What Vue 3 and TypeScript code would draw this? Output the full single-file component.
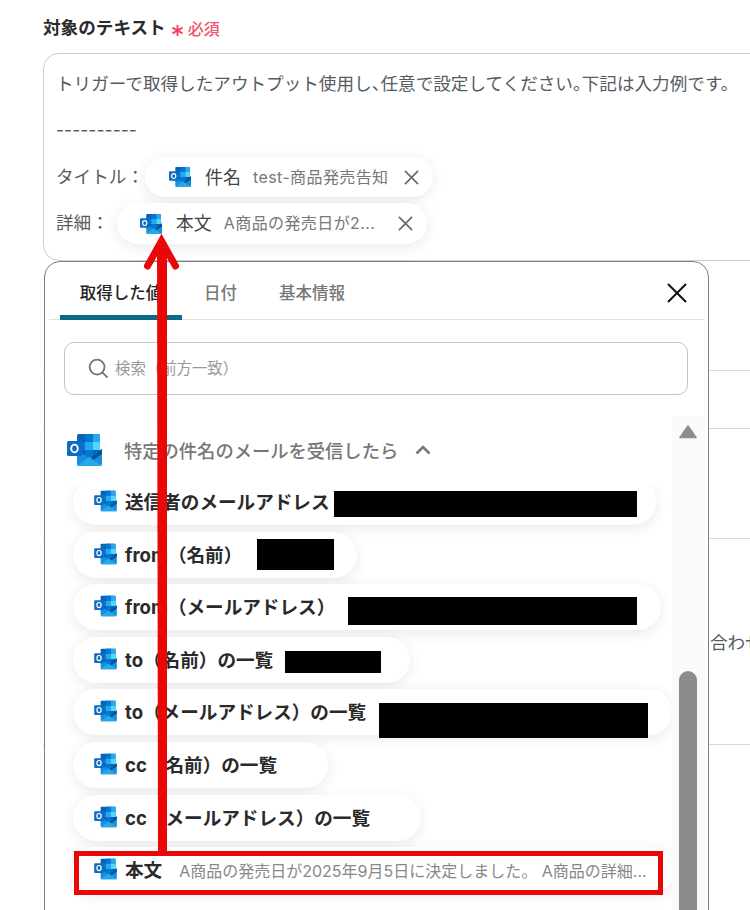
<script setup lang="ts">
interface Item {
  name: string
  width: number
  redact?: { w: number; h: number; ml: number; dy: number }
  sample?: string
}

const items: Item[] = [
  { name: '送信者のメールアドレス', width: 583, redact: { w: 303, h: 26, ml: 4, dy: 4 } },
  { name: 'from（名前）', width: 284, redact: { w: 77, h: 31, ml: 15, dy: 0 } },
  { name: 'from（メールアドレス）', width: 588, redact: { w: 289, h: 28, ml: 13, dy: 8 } },
  { name: 'to（名前）の一覧', width: 337, redact: { w: 96, h: 22, ml: 12, dy: 4 } },
  { name: 'to（メールアドレス）の一覧', width: 599, redact: { w: 269, h: 35, ml: 13, dy: 17 } },
  { name: 'cc（名前）の一覧', width: 255 },
  { name: 'cc（メールアドレス）の一覧', width: 348 },
  { name: '本文', width: 602, sample: 'A商品の発売日が2025年9月5日に決定しました。 A商品の詳細...' },
]
</script>

<template>
  <div class="page">
    <svg class="defs" width="0" height="0" aria-hidden="true">
      <symbol id="ol" viewBox="0 0 35 34">
        <rect x="10" y="1" width="23" height="24" rx="1.5" fill="#0364b8" />
        <rect x="18" y="1" width="8" height="8" fill="#0078d4" />
        <rect x="26" y="1" width="7" height="8" fill="#28a8ea" />
        <rect x="10" y="9" width="8" height="8" fill="#0078d4" />
        <rect x="18" y="9" width="8" height="8" fill="#28a8ea" />
        <rect x="26" y="9" width="7" height="8" fill="#50d9ff" />
        <rect x="18" y="17" width="8" height="8" fill="#0078d4" />
        <path d="M10 17 L22 25 L35 16 V31 a2 2 0 0 1 -2 2 H12 a2 2 0 0 1 -2 -2 Z" fill="#1490df" />
        <path d="M24 24 L35 16 V21 L26 27 Z" fill="#0a4f96" />
        <path d="M10 33 L22 24 L35 33 H10 Z" fill="#28a8ea" />
        <rect x="0" y="8" width="15" height="15" rx="1.5" fill="#0f6cc4" />
        <ellipse cx="7.5" cy="15.5" rx="3.3" ry="3.9" fill="none" stroke="#fff" stroke-width="1.9" />
      </symbol>
    </svg>

    <div class="form">
      <div class="label">
        <span class="label-text">対象のテキスト</span>
        <svg class="asterisk" viewBox="0 0 14 14"><path d="M7 1 V13 M1.6 3.9 L12.4 10.1 M12.4 3.9 L1.6 10.1" /></svg>
        <span class="required">必須</span>
      </div>

      <div class="textbox">
        <p class="line">トリガーで取得したアウトプット使用し<span class="halt">、</span>任意で設定してください<span class="halt">。</span>下記は入力例です。</p>
        <p class="line dashes">----------</p>
        <div class="field first">
          <span class="field-label">タイトル：</span>
          <span class="tag tag-title">
            <svg class="tag-icon"><use href="#ol" /></svg>
            <span class="tag-name">件名</span>
            <span class="tag-value">test-商品発売告知</span>
            <svg class="tag-close" viewBox="0 0 16 16"><path d="M1 1 L15 15 M15 1 L1 15" /></svg>
          </span>
        </div>
        <div class="field">
          <span class="field-label">詳細：</span>
          <span class="tag tag-body">
            <svg class="tag-icon"><use href="#ol" /></svg>
            <span class="tag-name">本文</span>
            <span class="tag-value">A商品の発売日が2...</span>
            <svg class="tag-close" viewBox="0 0 16 16"><path d="M1 1 L15 15 M15 1 L1 15" /></svg>
          </span>
        </div>
      </div>

      <div class="under r1"></div>
      <div class="under r2"></div>
      <div class="under r3"></div>
      <div class="under r4"><span>合わせて</span></div>
    </div>

    <div class="popup">
      <div class="tabs">
        <span class="tab active">取得した値</span>
        <span class="tab">日付</span>
        <span class="tab">基本情報</span>
        <svg class="popup-close" viewBox="0 0 20 20"><path d="M1 1 L19 19 M19 1 L1 19" /></svg>
      </div>

      <div class="search">
        <svg class="search-icon" viewBox="0 0 22 22"><circle cx="9.5" cy="9.5" r="7.8" /><path d="M15 15 L20.5 20.5" /></svg>
        <span class="search-text">検索（前方一致）</span>
      </div>

      <div class="panel">
        <div class="content">
          <div class="section">
            <svg class="section-icon"><use href="#ol" /></svg>
            <span class="section-title">特定の件名のメールを受信したら</span>
            <svg class="chevron" viewBox="0 0 16 10"><path d="M1.5 8.5 L8 2 L14.5 8.5" /></svg>
          </div>
          <div class="list">
            <div v-for="item in items" :key="item.name" class="chip" :style="{ width: item.width + 'px' }">
              <svg class="chip-icon"><use href="#ol" /></svg>
              <span class="chip-name">{{ item.name }}</span>
              <span
                v-if="item.redact"
                class="redact"
                :style="{ width: item.redact.w + 'px', height: item.redact.h + 'px', marginLeft: item.redact.ml + 'px', marginTop: item.redact.dy + 'px' }"
              ></span>
              <span v-if="item.sample" class="chip-sample">{{ item.sample }}</span>
            </div>
          </div>
        </div>
        <div class="scrollbar">
          <svg class="scroll-up" viewBox="0 0 18 14"><path d="M9 1 L17 12.5 H1 Z" /></svg>
          <div class="thumb"></div>
        </div>
      </div>
    </div>

    <svg class="annotation" width="750" height="910" viewBox="0 0 750 910">
      <rect x="76.5" y="853.5" width="584" height="39" fill="none" stroke="#e80808" stroke-width="5" />
      <path d="M157 244 H167 V856 H158 Z" fill="#e80808" />
      <path d="M147.5 266 L161.5 241 L175.5 266" fill="none" stroke="#e80808" stroke-width="7" stroke-linecap="round" stroke-linejoin="miter" />
    </svg>
  </div>
</template>

<style>
html,
body {
  margin: 0;
  background: #fff;
}
</style>

<style scoped>
.page {
  position: relative;
  width: 750px;
  height: 910px;
  overflow: hidden;
  background: #fff;
  font-family: Inter, "Noto Sans CJK JP", sans-serif;
  color: #2a2a2a;
}
.defs {
  position: absolute;
}
.form {
  padding: 13px 0 0 43px;
  width: 800px;
}
.label {
  display: flex;
  align-items: center;
  height: 27px;
  margin-bottom: 13px;
}
.label-text {
  font-size: 17.6px;
  font-weight: 700;
}
.asterisk {
  width: 13px;
  height: 13px;
  margin: 7px 4px 0 5px;
  flex: none;
}
.asterisk path {
  stroke: #f5405f;
  stroke-width: 2;
  fill: none;
}
.required {
  font-size: 16px;
  font-weight: 500;
  color: #f5506e;
  margin-top: 2px;
}
.textbox {
  box-sizing: border-box;
  height: 208px;
  padding: 18px 13px 0 12px;
  border: 1px solid #c9cdd8;
  border-radius: 16px;
  color: #555b62;
  font-size: 17.6px;
  line-height: 23px;
}
.line {
  margin: 0;
  white-space: nowrap;
}
.halt {
  font-feature-settings: "halt";
}
.dashes {
  margin-top: 23px;
}
.field {
  display: flex;
  align-items: center;
  margin-top: 5px;
  height: 41px;
}
.field.first {
  margin-top: 16px;
}
.field-label {
  margin-top: -3px;
}
.tag {
  box-sizing: border-box;
  display: flex;
  align-items: center;
  border-radius: 21px;
  background: #fff;
  box-shadow: 0 3px 14px rgba(0, 0, 0, 0.09);
}
.tag-title {
  width: 288px;
  height: 40px;
  margin-left: 1px;
  margin-top: -1px;
  padding-left: 24px;
}
.tag-body {
  width: 310px;
  height: 41px;
  margin-left: 8px;
  padding-left: 23px;
}
.tag-icon {
  width: 22px;
  height: 22px;
  flex: none;
}
.tag-name {
  font-size: 18px;
  margin-left: 14px;
  color: #444;
  white-space: nowrap;
}
.tag-value {
  font-size: 16px;
  letter-spacing: 0.4px;
  margin-left: 12px;
  color: #777;
  white-space: nowrap;
}
.tag-close {
  width: 15px;
  height: 15px;
  margin-left: auto;
  margin-right: 14px;
  flex: none;
}
.tag-close path {
  stroke: #666;
  stroke-width: 1.7;
  fill: none;
}
.under {
  box-sizing: border-box;
  border-bottom: 1px solid #d4d7de;
}
.r1 {
  height: 110px;
}
.r2 {
  height: 58px;
}
.r3 {
  height: 110px;
}
.r4 {
  height: 206px;
  display: flex;
  align-items: center;
  padding-left: 667px;
  color: #555b62;
  font-size: 17.6px;
}
.popup {
  position: absolute;
  left: 44px;
  top: 261px;
  box-sizing: border-box;
  width: 665px;
  height: 670px;
  background: #fff;
  border: 1px solid #808080;
  border-radius: 16px;
  padding: 0 4px;
  display: flex;
  flex-direction: column;
}
.tabs {
  position: relative;
  display: flex;
  height: 58px;
  flex: none;
  box-sizing: border-box;
  border-bottom: 1px solid #e0e0e0;
  padding-left: 11px;
}
.tab {
  box-sizing: border-box;
  display: flex;
  align-items: center;
  justify-content: center;
  height: 58px;
  padding-top: 2px;
  font-size: 16.5px;
  font-weight: 500;
  color: #777;
  margin-right: 31px;
  white-space: nowrap;
}
.tab + .tab {
  margin-left: 11px;
}
.tab.active {
  width: 122px;
  margin-right: 11px;
  color: #222;
  border-bottom: 5px solid #0b6b85;
  border-radius: 5px 5px 0 0;
  padding-top: 7px;
  position: relative;
}
.popup-close {
  position: absolute;
  right: 17px;
  top: 21px;
  width: 20px;
  height: 20px;
}
.popup-close path {
  stroke: #111;
  stroke-width: 2;
  fill: none;
}
.search {
  box-sizing: border-box;
  flex: none;
  display: flex;
  align-items: center;
  height: 53px;
  margin: 22px 16px 0 15px;
  padding-left: 23px;
  border: 1px solid #c6c6c6;
  border-radius: 10px;
  font-size: 15.4px;
  color: #999;
}
.search-text {
  margin-top: -3px;
}
.search-icon {
  width: 21px;
  height: 21px;
  margin-right: 6px;
}
.search-icon circle,
.search-icon path {
  fill: none;
  stroke: #777;
  stroke-width: 2;
}
.panel {
  flex: 1;
  display: flex;
  margin-top: 21px;
  min-height: 0;
}
.content {
  flex: 1;
  min-width: 0;
  display: flex;
  flex-direction: column;
}
.section {
  flex: none;
  display: flex;
  align-items: center;
  height: 68px;
  padding-left: 18px;
  background: #fff;
  position: relative;
  z-index: 1;
}
.section-icon {
  width: 35px;
  height: 34px;
  flex: none;
}
.section-title {
  font-size: 18.3px;
  font-weight: 500;
  color: #777;
  margin-left: 22px;
  white-space: nowrap;
}
.chevron {
  width: 16px;
  height: 10px;
  margin-left: 17px;
}
.chevron path {
  fill: none;
  stroke: #777;
  stroke-width: 2.6;
}
.list {
  display: flex;
  flex-direction: column;
  gap: 6.6px;
  margin-top: -5px;
  padding-left: 24px;
}
.chip {
  box-sizing: border-box;
  flex: none;
  display: flex;
  align-items: center;
  height: 46px;
  padding-left: 21px;
  border-radius: 23px;
  background: #fff;
  box-shadow: 0 3px 14px rgba(0, 0, 0, 0.09);
}
.chip-icon {
  width: 23px;
  height: 22px;
  margin-top: -2px;
  flex: none;
}
.chip-name {
  margin-left: 8px;
  font-size: 18.6px;
  font-weight: 700;
  color: #2a2a2a;
  white-space: nowrap;
  margin-top: -3px;
}
.redact {
  flex: none;
  background: #000;
}
.chip-sample {
  margin-left: 17px;
  font-size: 16px;
  color: #888;
  white-space: nowrap;
}
.scrollbar {
  position: relative;
  flex: none;
  width: 32px;
  background: #fafafa;
  margin-left: 2px;
  box-sizing: border-box;
}
.scroll-up {
  position: absolute;
  left: 7px;
  top: 9px;
  width: 18px;
  height: 14px;
}
.scroll-up path {
  fill: #8c8c8c;
  stroke: #8c8c8c;
  stroke-linejoin: round;
  stroke-width: 1.5;
}
.thumb {
  position: absolute;
  left: 7px;
  top: 255px;
  width: 18px;
  height: 300px;
  border-radius: 9px;
  background: #8c8c8c;
}
.annotation {
  position: absolute;
  left: 0;
  top: 0;
  z-index: 5;
  pointer-events: none;
}
</style>
